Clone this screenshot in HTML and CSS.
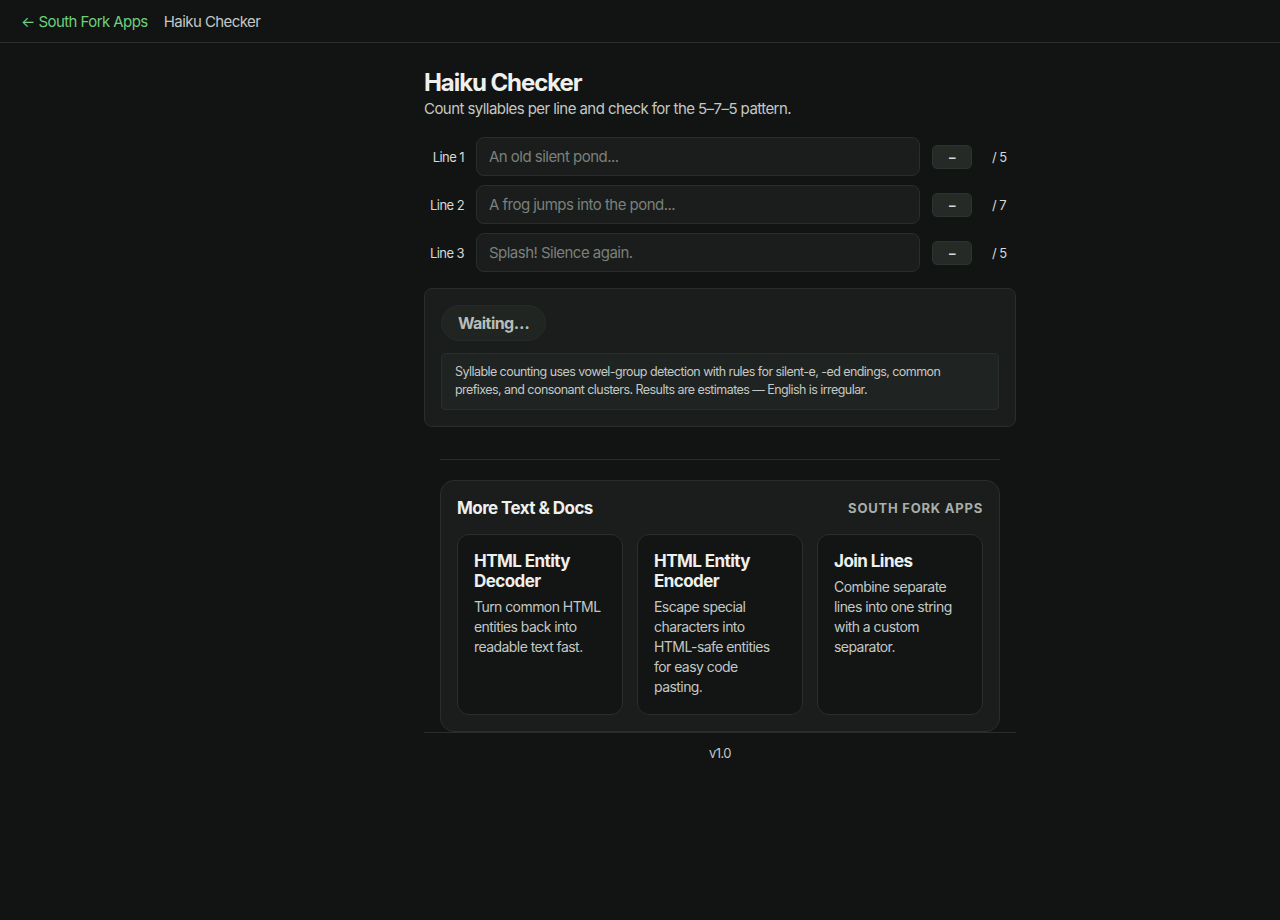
FILE: index.html
```html
<!DOCTYPE html>
<html lang="en">
<head>
    <meta charset="UTF-8">
    <meta name="viewport" content="width=device-width, initial-scale=1.0">
    <title>Haiku Checker</title>
    <link rel="stylesheet" href="styles.css">
</head>
<body>

<header class="top-nav">
    <a class="back-link" href="#">&larr; South Fork Apps</a>
    <span class="nav-title">Haiku Checker</span>
</header>

<main class="page">
    <h1>Haiku Checker</h1>
    <p class="lead">Count syllables per line and check for the 5&ndash;7&ndash;5 pattern.</p>

    <div class="lines">
        <div class="line-row">
            <label for="line1">Line 1</label>
            <input id="line1" type="text" placeholder="An old silent pond...">
            <span class="count">&ndash;</span>
            <span class="target">/ 5</span>
        </div>
        <div class="line-row">
            <label for="line2">Line 2</label>
            <input id="line2" type="text" placeholder="A frog jumps into the pond...">
            <span class="count">&ndash;</span>
            <span class="target">/ 7</span>
        </div>
        <div class="line-row">
            <label for="line3">Line 3</label>
            <input id="line3" type="text" placeholder="Splash! Silence again.">
            <span class="count">&ndash;</span>
            <span class="target">/ 5</span>
        </div>
    </div>

    <section class="result">
        <div class="status-pill">Waiting&hellip;</div>
        <p class="note">Syllable counting uses vowel-group detection with rules for silent-e, -ed endings, common prefixes, and consonant clusters. Results are estimates &mdash; English is irregular.</p>
    </section>

    <hr class="divider">

    <section class="related">
        <div class="related-head">
            <h2>More Text &amp; Docs</h2>
            <span class="brand">South Fork Apps</span>
        </div>
        <div class="related-grid">
            <a class="tool-card" href="#">
                <h3>HTML Entity Decoder</h3>
                <p>Turn common HTML entities back into readable text fast.</p>
            </a>
            <a class="tool-card" href="#">
                <h3>HTML Entity Encoder</h3>
                <p>Escape special characters into HTML-safe entities for easy code pasting.</p>
            </a>
            <a class="tool-card" href="#">
                <h3>Join Lines</h3>
                <p>Combine separate lines into one string with a custom separator.</p>
            </a>
        </div>
    </section>

    <footer class="foot">v1.0</footer>
</main>

</body>
</html>
```

FILE: styles.css
```css
  body {
      margin: 0;
      background-color: #121413;
      color: #e8ebe8;
      font-family: Inter, "Noto Sans", sans-serif;
      letter-spacing: -0.035em;
  }
  .top-nav {
      display: flex;
      align-items: center;
      gap: 16px;
      height: 42px;
      padding: 0 21px;
      border-bottom: 1px solid #2a2d2b;
      font-size: 15px;
  }
  .back-link {
      color: #6fcf7c;
      text-decoration: none;
  }
  .nav-title {
      color: #c4c8c5;
  }
  /* content column sits right of centre, past the empty left gutter */
  .page {
      width: 592px;
      margin: 0 auto;
      padding: 26px 0 0 160px;
  }
  h1 {
      margin: 0;
      font-size: 24px;
      font-weight: 700;
      line-height: 28px;
      letter-spacing: -0.045em;
      color: #eef0ee;
  }
  .lead {
      margin: 2px 0 18px;
      font-size: 15px;
      line-height: 20px;
      color: #c4c8c5;
  }
  .lines {
      display: flex;
      flex-direction: column;
      gap: 9px;
  }
  .line-row {
      display: flex;
      align-items: center;
  }
  .line-row label {
      width: 40px;
      text-align: right;
      font-size: 13px;
      color: #d6d9d6;
      margin-right: 12px;
  }
  .line-row input {
      width: 444px;
      height: 39px;
      box-sizing: border-box;
      padding: 0 12px;
      background-color: #1a1d1b;
      border: 1px solid #2a2e2b;
      border-radius: 8px;
      color: #e8ebe8;
      font-family: inherit;
      font-size: 15px;
      letter-spacing: -0.035em;
  }
  .line-row input::placeholder {
      color: #7b807c;
  }
  .count {
      width: 40px;
      height: 24px;
      margin-left: 12px;
      display: flex;
      align-items: center;
      justify-content: center;
      background-color: #252a27;
      border: 1px solid #2e3330;
      border-radius: 5px;
      box-sizing: border-box;
      font-size: 13px;
      font-weight: 700;
      color: #d6d9d6;
  }
  .target {
      margin-left: auto;
      width: 24px;
      font-size: 13px;
      color: #d6d9d6;
  }
  .result {
      margin-top: 16px;
      padding: 16px;
      background-color: #1a1d1b;
      border: 1px solid #2a2e2b;
      border-radius: 8px;
  }
  .status-pill {
      width: fit-content;
      box-sizing: border-box;
      height: 36px;
      line-height: 34px;
      padding: 0 16px;
      border-radius: 18px;
      background-color: #202522;
      border: 1px solid #262b28;
      font-size: 16px;
      font-weight: 700;
      color: #b8bdb9;
  }
  .note {
      margin: 12px 0 0;
      padding: 9px 13px 10px;
      background-color: #1f2321;
      border: 1px solid #2a2e2b;
      border-radius: 4px;
      font-size: 12.5px;
      line-height: 18px;
      color: #c4c8c5;
  }
  .divider {
      margin: 32px 16px 20px;
      border: none;
      border-top: 1px solid #2a2e2b;
  }
  .related {
      margin: 0 16px;
      padding: 16px;
      background-color: #1a1d1b;
      border: 1px solid #2a2e2b;
      border-radius: 14px;
  }
  .related-head {
      display: flex;
      justify-content: space-between;
      align-items: center;
      margin-bottom: 15px;
  }
  .related-head h2 {
      margin: 0;
      font-size: 17px;
      font-weight: 700;
      line-height: 22px;
      color: #eef0ee;
  }
  .brand {
      font-size: 13px;
      font-weight: 700;
      letter-spacing: 0.06em;
      text-transform: uppercase;
      color: #a9aea9;
  }
  .related-grid {
      display: grid;
      grid-template-columns: repeat(3, 1fr);
      gap: 14px;
  }
  .tool-card {
      min-height: 181px;
      box-sizing: border-box;
      padding: 16px;
      background-color: #121513;
      border: 1px solid #2a2e2b;
      border-radius: 12px;
      text-decoration: none;
  }
  .tool-card h3 {
      margin: 0 0 6px;
      font-size: 17px;
      font-weight: 700;
      line-height: 20px;
      color: #eef0ee;
  }
  .tool-card p {
      margin: 0;
      font-size: 14px;
      line-height: 20px;
      color: #c4c8c5;
  }
  .foot {
      padding: 12px 0;
      border-top: 1px solid #2a2e2b;
      text-align: center;
      font-size: 13px;
      color: #c4c8c5;
  }
```
